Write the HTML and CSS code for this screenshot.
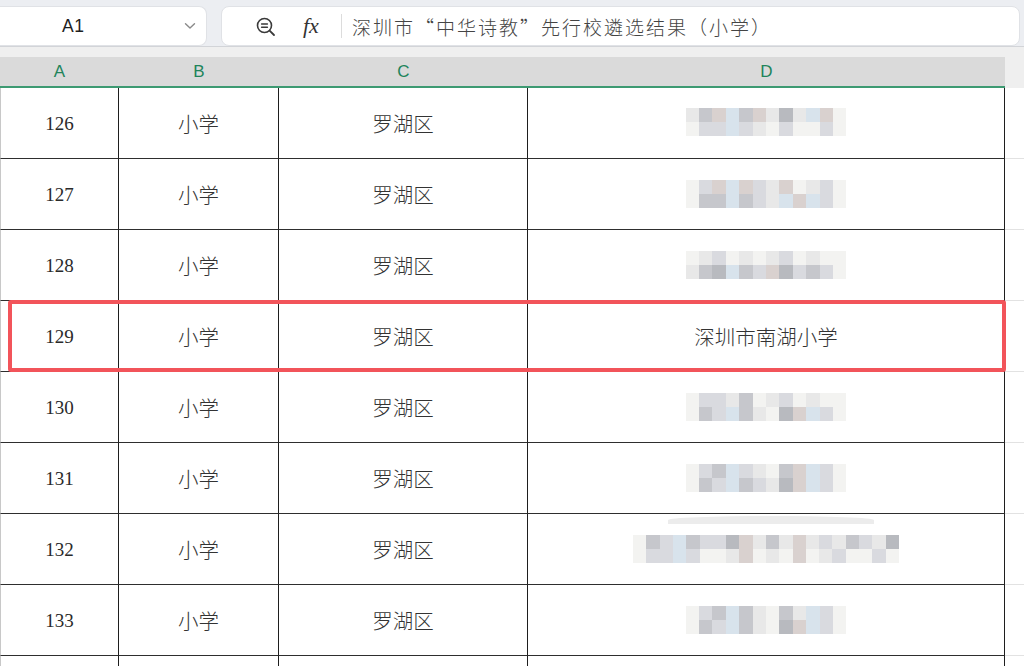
FILE: index.html
```html
<!DOCTYPE html>
<html>
<head>
    <meta charset="utf-8" />
    <title>深圳市“中华诗教”先行校遴选结果（小学）</title>
    <link rel="stylesheet" href="styles.css">
</head>
<body>
    <div class="topbar">
        <div class="namebox">
            <span class="cellref">A1</span>
            <svg class="chev" width="12" height="8" viewBox="0 0 12 8"><path d="M1.5 1.8 L6 6 L10.5 1.8" fill="none" stroke="#8a8a8a" stroke-width="1.4" stroke-linecap="round" stroke-linejoin="round"/></svg>
        </div>
        <div class="formula">
            <svg class="zoomicon" width="24" height="24" viewBox="0 0 24 24">
                <circle cx="10.5" cy="10.5" r="7" fill="none" stroke="#3a3a3a" stroke-width="1.6"/>
                <path d="M15.6 15.6 L20 20" stroke="#3a3a3a" stroke-width="1.8" stroke-linecap="round"/>
                <path d="M7.6 9 H13.4 M7.6 12.2 H13.4" stroke="#3a3a3a" stroke-width="1.5" stroke-linecap="round"/>
            </svg>
            <span class="fx">fx</span>
            <span class="divider"></span>
            <span class="ftext">深圳市“中华诗教”先行校遴选结果（小学）</span>
        </div>
    </div>
    <div class="strip"></div>

    <div class="sheet">
        <div class="colhead">
            <div class="ch">A</div>
            <div class="ch">B</div>
            <div class="ch">C</div>
            <div class="ch">D</div>
            <div class="ch rest"></div>
        </div>

        <div class="row">
            <div class="cell num">126</div>
            <div class="cell cn">小学</div>
            <div class="cell cn">罗湖区</div>
            <div class="cell">
                <div class="mosaic m12 up">
                    <i class="f"></i><i class="c"></i><i class="e"></i><i class="d"></i><i class="c"></i><i class="e"></i><i class="f"></i><i class="g"></i><i class="f"></i><i class="d"></i><i class="e"></i><i class="a"></i>
                    <i class="a"></i><i class="b"></i><i class="b"></i><i class="d"></i><i class="b"></i><i class="f"></i><i class="a"></i><i class="b"></i><i class="a"></i><i class="a"></i><i class="b"></i><i class="a"></i>
                </div>
            </div>
            <div class="cell spare"></div>
        </div>

        <div class="row">
            <div class="cell num">127</div>
            <div class="cell cn">小学</div>
            <div class="cell cn">罗湖区</div>
            <div class="cell">
                <div class="mosaic m12">
                    <i class="a"></i><i class="b"></i><i class="e"></i><i class="d"></i><i class="e"></i><i class="b"></i><i class="f"></i><i class="e"></i><i class="a"></i><i class="f"></i><i class="b"></i><i class="a"></i>
                    <i class="a"></i><i class="c"></i><i class="c"></i><i class="d"></i><i class="c"></i><i class="b"></i><i class="f"></i><i class="d"></i><i class="e"></i><i class="d"></i><i class="b"></i><i class="a"></i>
                </div>
            </div>
            <div class="cell spare"></div>
        </div>

        <div class="row">
            <div class="cell num">128</div>
            <div class="cell cn">小学</div>
            <div class="cell cn">罗湖区</div>
            <div class="cell">
                <div class="mosaic m12">
                    <i class="a"></i><i class="f"></i><i class="b"></i><i class="a"></i><i class="f"></i><i class="a"></i><i class="f"></i><i class="b"></i><i class="a"></i><i class="f"></i><i class="a"></i><i class="a"></i>
                    <i class="f"></i><i class="c"></i><i class="g"></i><i class="d"></i><i class="c"></i><i class="b"></i><i class="e"></i><i class="g"></i><i class="b"></i><i class="c"></i><i class="b"></i><i class="a"></i>
                </div>
            </div>
            <div class="cell spare"></div>
        </div>

        <div class="row">
            <div class="cell num">129</div>
            <div class="cell cn">小学</div>
            <div class="cell cn">罗湖区</div>
            <div class="cell cn">深圳市南湖小学</div>
            <div class="cell spare"></div>
        </div>

        <div class="row">
            <div class="cell num">130</div>
            <div class="cell cn">小学</div>
            <div class="cell cn">罗湖区</div>
            <div class="cell">
                <div class="mosaic m12">
                    <i class="a"></i><i class="b"></i><i class="b"></i><i class="f"></i><i class="c"></i><i class="a"></i><i class="f"></i><i class="b"></i><i class="a"></i><i class="f"></i><i class="a"></i><i class="a"></i>
                    <i class="a"></i><i class="c"></i><i class="b"></i><i class="d"></i><i class="c"></i><i class="f"></i><i class="a"></i><i class="g"></i><i class="e"></i><i class="d"></i><i class="b"></i><i class="a"></i>
                </div>
            </div>
            <div class="cell spare"></div>
        </div>

        <div class="row">
            <div class="cell num">131</div>
            <div class="cell cn">小学</div>
            <div class="cell cn">罗湖区</div>
            <div class="cell">
                <div class="mosaic m12">
                    <i class="a"></i><i class="b"></i><i class="c"></i><i class="d"></i><i class="b"></i><i class="f"></i><i class="a"></i><i class="c"></i><i class="e"></i><i class="d"></i><i class="b"></i><i class="a"></i>
                    <i class="a"></i><i class="c"></i><i class="b"></i><i class="d"></i><i class="c"></i><i class="b"></i><i class="f"></i><i class="g"></i><i class="e"></i><i class="d"></i><i class="b"></i><i class="a"></i>
                </div>
            </div>
            <div class="cell spare"></div>
        </div>

        <div class="row">
            <div class="cell num">132</div>
            <div class="cell cn">小学</div>
            <div class="cell cn">罗湖区</div>
            <div class="cell">
                <div class="mosaic m20 swoosh">
                    <i class="a"></i><i class="c"></i><i class="b"></i><i class="d"></i><i class="c"></i><i class="b"></i><i class="b"></i><i class="g"></i><i class="e"></i><i class="f"></i><i class="c"></i><i class="f"></i><i class="e"></i><i class="f"></i><i class="b"></i><i class="f"></i><i class="c"></i><i class="b"></i><i class="f"></i><i class="g"></i>
                    <i class="a"></i><i class="b"></i><i class="b"></i><i class="d"></i><i class="b"></i><i class="a"></i><i class="a"></i><i class="f"></i><i class="e"></i><i class="a"></i><i class="f"></i><i class="a"></i><i class="e"></i><i class="a"></i><i class="f"></i><i class="b"></i><i class="a"></i><i class="a"></i><i class="b"></i><i class="a"></i>
                </div>
            </div>
            <div class="cell spare"></div>
        </div>

        <div class="row">
            <div class="cell num">133</div>
            <div class="cell cn">小学</div>
            <div class="cell cn">罗湖区</div>
            <div class="cell">
                <div class="mosaic m12">
                    <i class="a"></i><i class="b"></i><i class="c"></i><i class="d"></i><i class="c"></i><i class="f"></i><i class="a"></i><i class="c"></i><i class="f"></i><i class="d"></i><i class="b"></i><i class="a"></i>
                    <i class="a"></i><i class="c"></i><i class="b"></i><i class="d"></i><i class="c"></i><i class="f"></i><i class="a"></i><i class="g"></i><i class="e"></i><i class="d"></i><i class="b"></i><i class="a"></i>
                </div>
            </div>
            <div class="cell spare"></div>
        </div>

        <div class="row tail">
            <div class="cell num"></div>
            <div class="cell cn"></div>
            <div class="cell cn"></div>
            <div class="cell"></div>
            <div class="cell spare"></div>
        </div>

        <!-- highlight around row 129 -->
        <div class="mark"></div>
    </div>
</body>
</html>
```

FILE: styles.css
```css
* {
    box-sizing: border-box;
}

html, body {
    overflow: hidden;
}

body {
    margin: 0;
    background: #ffffff;
    font-family: "Liberation Sans", "Noto Sans CJK SC", sans-serif;
    height: 666px;
}

.topbar {
    display: flex;
    gap: 14px;
    height: 47px;
    padding: 6px 4px 0 0;
    background: #eceef2;
    border-bottom: 1px solid #d2d4d8;
}

.namebox {
    width: 207px;
    height: 40px;
    background: #ffffff;
    border: 1px solid #e0e2e6;
    border-left: none;
    border-radius: 0 8px 8px 0;
    display: flex;
    align-items: center;
    padding: 0 10px 0 62px;
}

.cellref {
    flex: 1;
    font-size: 17.5px;
    color: #1e1e1e;
    letter-spacing: 0.5px;
}

.formula {
    flex: 1;
    height: 40px;
    background: #ffffff;
    border: 1px solid #e0e2e6;
    border-radius: 8px;
    display: flex;
    align-items: center;
    padding-left: 32px;
}

.zoomicon {
    margin-top: 1px;
}

.fx {
    font-family: "Liberation Serif", serif;
    font-style: italic;
    font-size: 22px;
    color: #333;
    margin-left: 25px;
}

.divider {
    width: 1px;
    height: 24px;
    background: #dcdcdc;
    margin-left: 22px;
}

.ftext {
    font-family: "Noto Sans CJK SC", sans-serif;
    font-weight: 300;
    font-size: 19px;
    letter-spacing: 2px;
    color: #444;
    margin-left: 10px;
}

.strip {
    height: 10px;
    background: #efefef;
}

.sheet {
    position: relative;
}

.colhead {
    display: grid;
    grid-template-columns: 119px 160px 249px 477px 1fr;
    height: 31px;
}

.ch {
    background: #dadada;
    border-bottom: 2px solid #3d9a72;
    color: #21845a;
    font-size: 17px;
    display: flex;
    align-items: center;
    justify-content: center;
}

.ch.rest {
    background: #efefef;
    border-bottom: none;
}

.row {
    display: grid;
    grid-template-columns: 119px 160px 249px 477px 1fr;
    height: 71px;
}

.row.tail {
    height: 12px;
}

.row.tail .cell {
    border-bottom: none;
}

.cell {
    border-right: 1px solid #1e1e1e;
    border-bottom: 1.5px solid #2e2e2e;
    display: flex;
    align-items: center;
    justify-content: center;
    color: #2a2a2a;
}

.cell:first-child {
    border-left: 1px solid #c8c8c8;
}

.num {
    font-family: "Liberation Serif", serif;
    font-size: 19px;
    padding-top: 2px;
}

.cn {
    font-family: "Noto Sans CJK SC", sans-serif;
    font-weight: 300;
    font-size: 20.5px;
    color: #333;
}

.spare {
    border-right: none;
    border-bottom: 1px solid #e2e2e2;
}

/* pixelated, blurred school names */
.mosaic {
    display: grid;
    grid-auto-rows: 14px;
    filter: blur(0.5px);
    position: relative;
}

.mosaic.m12 {
    grid-template-columns: repeat(12, 13.4px);
}

.mosaic.m20 {
    grid-template-columns: repeat(20, 13.3px);
}

.mosaic.up {
    margin-top: -3px;
}

.mosaic.swoosh::before {
    content: "";
    position: absolute;
    left: 35px;
    right: 25px;
    top: -19px;
    height: 8px;
    background: #ececec;
    border-radius: 60% 60% 0 0;
}

.mosaic i {
    display: block;
}

.mosaic .a { background: #f3f3f1; }
.mosaic .b { background: #d9dadf; }
.mosaic .c { background: #c6c7cc; }
.mosaic .d { background: #d8e3ec; }
.mosaic .e { background: #d9d1cf; }
.mosaic .f { background: #e8e8e8; }
.mosaic .g { background: #b8babf; }

.mark {
    position: absolute;
    left: 8px;
    top: 243px;
    width: 998px;
    height: 72px;
    border: 4px solid #f2545a;
    border-radius: 3px;
}
```
